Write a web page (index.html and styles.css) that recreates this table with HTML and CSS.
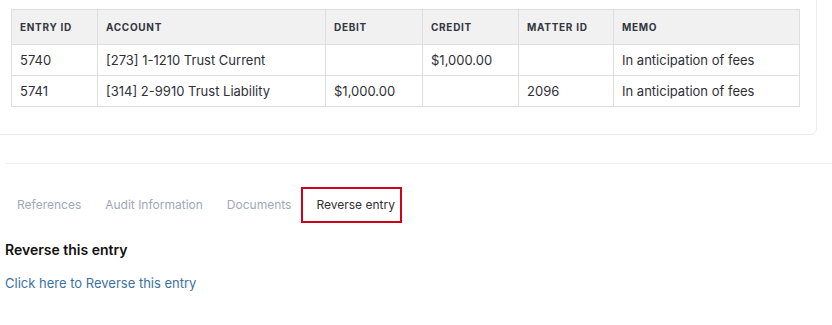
FILE: index.html
```html
<!DOCTYPE html>
<html lang="en">
<head>
<meta charset="utf-8">
<title>Journal entry</title>
<link rel="stylesheet" href="styles.css">
</head>
<body>
  <div class="card">
    <table class="lines">
      <thead>
        <tr>
          <th class="c-id">Entry ID</th>
          <th class="c-acct">Account</th>
          <th class="c-debit">Debit</th>
          <th class="c-credit">Credit</th>
          <th class="c-matter">Matter ID</th>
          <th class="c-memo">Memo</th>
        </tr>
      </thead>
      <tbody>
        <tr>
          <td>5740</td>
          <td>[273] 1-1210 Trust Current</td>
          <td></td>
          <td>$1,000.00</td>
          <td></td>
          <td>In anticipation of fees</td>
        </tr>
        <tr>
          <td>5741</td>
          <td>[314] 2-9910 Trust Liability</td>
          <td>$1,000.00</td>
          <td></td>
          <td>2096</td>
          <td>In anticipation of fees</td>
        </tr>
      </tbody>
    </table>
  </div>

  <section class="details">
    <nav class="tabs">
      <a class="tab" href="#">References</a>
      <a class="tab" href="#">Audit Information</a>
      <a class="tab" href="#">Documents</a>
      <a class="tab active" href="#">Reverse entry</a>
    </nav>
    <h3 class="panel-title">Reverse this entry</h3>
    <a class="panel-link" href="#">Click here to Reverse this entry</a>
  </section>
</body>
</html>
```
FILE: styles.css
```css
html, body {
  margin: 0;
  padding: 0;
  background: #ffffff;
  font-family: Inter, "Noto Sans", sans-serif;
  color: #2f2f33;
  overflow: hidden;
}

.card {
  margin: -20px 15px 0 -6px;
  padding: 28px 16px 27px 16px;
  border: 1px solid #ececec;
  border-radius: 6px;
}

.lines {
  width: 100%;
  border-collapse: collapse;
  table-layout: fixed;
  font-size: 13px;
}

.lines th,
.lines td {
  border: 1px solid #dedede;
  text-align: left;
  padding: 0 8px;
  white-space: nowrap;
}

.lines th {
  height: 34px;
  background: #f1f1f1;
  font-size: 10px;
  font-weight: 700;
  letter-spacing: 0.7px;
  text-transform: uppercase;
  color: #333640;
}

.lines td {
  height: 30px;
  color: #2f2f38;
}

/* column widths (content box; padding and rule come on top) */
.c-id { width: 69px; }
.c-acct { width: 211px; }
.c-debit { width: 80px; }
.c-credit { width: 79px; }
.c-matter { width: 78px; }

.details {
  margin: 28px 0 0 5px;
  border-top: 1px solid #efefef;
  padding-top: 23px;
}

.tabs {
  display: flex;
  align-items: center;
}

.tab {
  display: block;
  padding: 0 10px;
  line-height: 32px;
  font-size: 12px;
  color: #9ea9b6;
  text-decoration: none;
  border: 2px solid transparent;
}

.tab.active {
  margin-left: -2px;
  color: #2f2f38;
  border-color: #d0021b;
  padding: 0 5px 0 13px;
}

.panel-title {
  margin: 18px 0 0 0;
  font-size: 14px;
  font-weight: 600;
  color: #111111;
}

.panel-link {
  display: inline-block;
  margin-top: 17px;
  font-size: 13px;
  color: #3c72a3;
  text-decoration: none;
}
```
